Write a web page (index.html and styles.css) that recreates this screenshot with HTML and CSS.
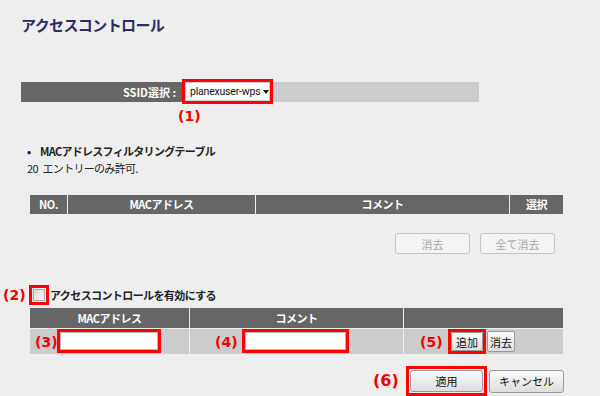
FILE: index.html
```html
<!DOCTYPE html>
<html lang="ja">
<head>
    <meta charset="UTF-8">
    <title>アクセスコントロール</title>
    <link rel="stylesheet" href="styles.css">
</head>
<body>

<div class="page">
    <h1 class="title">アクセスコントロール</h1>

    <div class="ssid-bar">
        <div class="ssid-label">SSID選択 :</div>
        <div class="mark ssid-mark">
            <div class="select">planexuser-wps<span class="caret"></span></div>
        </div>
    </div>
    <div class="note note-1">(1)</div>

    <div class="filter-info">
        <p class="bullet">MACアドレスフィルタリングテーブル</p>
        <p class="limit">20 エントリーのみ許可.</p>
    </div>

    <div class="list-head">
        <div class="head-cell">NO.</div>
        <div class="head-cell">MACアドレス</div>
        <div class="head-cell">コメント</div>
        <div class="head-cell">選択</div>
    </div>

    <div class="list-actions">
        <button class="btn btn-wide" disabled>消去</button>
        <button class="btn btn-wide" disabled>全て消去</button>
    </div>

    <div class="enable-row">
        <span class="note note-2">(2)</span>
        <span class="mark check-mark"><span class="checkbox"></span></span>
        <span class="enable-label">アクセスコントロールを有効にする</span>
    </div>

    <div class="add-table">
        <div class="head-cell">MACアドレス</div>
        <div class="head-cell">コメント</div>
        <div class="head-cell"></div>

        <div class="add-cell add-mac">
            <span class="note note-3">(3)</span>
            <span class="mark input-mark mac-mark"><span class="input"></span></span>
        </div>
        <div class="add-cell add-comment">
            <span class="note note-4">(4)</span>
            <span class="mark input-mark comment-mark"><span class="input"></span></span>
        </div>
        <div class="add-cell add-buttons">
            <span class="note note-5">(5)</span>
            <span class="mark add-mark"><button class="btn btn-small">追加</button></span>
            <button class="btn btn-small btn-clear">消去</button>
        </div>
    </div>

    <div class="form-actions">
        <span class="note note-6">(6)</span>
        <span class="mark apply-mark"><button class="btn btn-apply">適用</button></span>
        <button class="btn btn-cancel">キャンセル</button>
    </div>
</div>

</body>
</html>
```

FILE: styles.css
```css
body {
    margin: 0;
    background-color: #eeeeee;
    font-family: "Liberation Sans", "Noto Sans CJK JP", sans-serif;
    font-size: 11px;
    color: #222;
}

.page {
    width: 600px;
    height: 396px;
    overflow: hidden;
}

.title {
    margin: 15px 0 0 21px;
    font-family: "Noto Sans CJK JP", sans-serif;
    font-size: 15px;
    line-height: 20px;
    font-weight: bold;
    color: #2c2c62;
    letter-spacing: -0.6px;
}

/* red annotation frames */
.mark {
    box-sizing: border-box;
    border: 3px solid #ff0000;
    display: flex;
    align-items: center;
    justify-content: center;
}

.note {
    font-family: "DejaVu Sans", sans-serif;
    font-weight: bold;
    font-size: 14px;
    color: #f00000;
    line-height: 16px;
}

/* SSID bar */
.ssid-bar {
    margin: 47px 0 0 21px;
    width: 458px;
    height: 20px;
    display: flex;
    background-color: #cccccc;
}

.ssid-label {
    box-sizing: border-box;
    width: 161px;
    padding-right: 6px;
    background-color: #666666;
    color: #fff;
    font-weight: bold;
    text-align: right;
    line-height: 20px;
    font-family: "Noto Sans CJK JP", sans-serif;
}

.ssid-mark {
    width: 91px;
    height: 25px;
    margin-top: -3px;
}

.select {
    box-sizing: border-box;
    width: 100%;
    height: 100%;
    background-color: #fff;
    border: 1px solid #d0d0d0;
    padding-left: 4px;
    display: flex;
    align-items: center;
    font-family: Roboto, "Liberation Sans", sans-serif;
    font-size: 10.5px;
    letter-spacing: -0.2px;
    white-space: nowrap;
    color: #111;
}

.caret {
    flex: none;
    margin-left: 3px;
    border-left: 3px solid transparent;
    border-right: 3px solid transparent;
    border-top: 4px solid #111;
}

.note-1 {
    margin: 6px 0 0 178px;
}

/* filter table info */
.filter-info {
    margin: 19px 0 0 27px;
    line-height: 17px;
}

.filter-info p {
    margin: 0;
    font-family: "Noto Sans CJK JP", sans-serif;
    letter-spacing: -0.7px;
}

.limit {
    word-spacing: 3px;
}

.bullet {
    font-weight: bold;
}

.bullet::before {
    content: "•";
    display: inline-block;
    width: 13px;
}

.list-head {
    margin: 18px 0 0 30px;
    display: grid;
    grid-template-columns: 37px 187px 253px 53px;
    column-gap: 1px;
    height: 19px;
}

.head-cell {
    background-color: #666666;
    color: #fff;
    font-weight: bold;
    text-align: center;
    line-height: 19px;
    font-family: "Noto Sans CJK JP", sans-serif;
    letter-spacing: -0.5px;
}

.list-actions {
    margin: 19px 0 0 30px;
    width: 525px;
    display: flex;
    justify-content: flex-end;
    gap: 10px;
}

/* buttons */
.btn {
    box-sizing: border-box;
    font-family: "Noto Sans CJK JP", sans-serif;
    font-size: 11px;
    color: #111;
    background: linear-gradient(#fbfbfb, #dedede);
    border: 1px solid #999;
    border-radius: 3px;
    padding: 0;
    cursor: pointer;
}

.btn-wide {
    width: 75px;
    height: 21px;
}

.btn:disabled {
    color: #a8a8a8;
    background: #f3f3f3;
    border-color: #c4c4c4;
    cursor: default;
}

/* enable checkbox */
.enable-row {
    margin: 31px 0 0 3px;
    height: 20px;
    display: flex;
    align-items: center;
}

.note-2 {
    width: 26px;
}

.check-mark {
    width: 20px;
    height: 20px;
}

.checkbox {
    box-sizing: border-box;
    width: 12px;
    height: 12px;
    border: 1px solid #a8a8a8;
    background: linear-gradient(135deg, #d8d8d8, #f6f6f6);
}

.enable-label {
    margin-left: 1px;
    font-family: "Noto Sans CJK JP", sans-serif;
    font-weight: bold;
    letter-spacing: -0.6px;
}

/* add entry table */
.add-table {
    margin: 3px 0 0 30px;
    display: grid;
    grid-template-columns: 159px 213px 159px;
    grid-template-rows: 20px 25px;
    gap: 1px;
}

.add-table .head-cell {
    line-height: 20px;
}

.add-cell {
    background-color: #cccccc;
    display: flex;
    align-items: center;
}

.add-mac {
    padding-left: 5px;
}

.note-3 {
    width: 22px;
}

.add-comment {
    padding-left: 25px;
}

.note-4 {
    width: 27px;
}

.add-buttons {
    padding-left: 16px;
}

.note-5 {
    width: 28px;
}

.input-mark {
    height: 24px;
    align-self: flex-start;
}

.mac-mark {
    width: 104px;
}

.comment-mark {
    width: 107px;
}

.input {
    box-sizing: border-box;
    width: 100%;
    height: 100%;
    background-color: #fff;
    border: 1px solid #b8b8b8;
}

.add-mark {
    width: 38px;
    height: 25px;
}

.btn-small {
    width: 28px;
    height: 20px;
    border-radius: 2px;
}

.add-mark .btn-small {
    width: 32px;
    height: 19px;
}

.btn-clear {
    margin-left: 1px;
    height: 21px;
}

/* apply / cancel */
.form-actions {
    margin: 12px 0 0 373px;
    display: flex;
    align-items: center;
    height: 30px;
}

.note-6 {
    width: 33px;
    font-size: 16px;
}

.apply-mark {
    width: 81px;
    height: 30px;
}

.btn-apply {
    width: 73px;
    height: 22px;
}

.btn-cancel {
    margin-left: 2px;
    width: 75px;
    height: 23px;
}
```
